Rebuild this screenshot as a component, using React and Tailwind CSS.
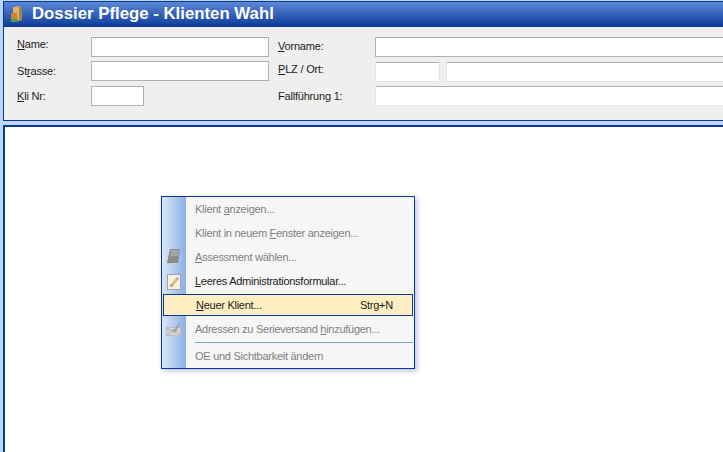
import React from 'react';

const FolderIcon = () => (
    <svg width="13" height="18" viewBox="0 0 13 18" className="shrink-0">
        <path d="M3 1 L11 0 L12 14 L3 16 Z" fill="#d9b36a" />
        <path d="M9 1 L11 0 L12 14 L9 15 Z" fill="#a9823f" />
        <rect x="1" y="7" width="6" height="8" fill="#b9893f" />
        <circle cx="4" cy="9" r="2" fill="#e8792b" />
        <rect x="1" y="13" width="7" height="3" fill="#4fa03a" />
    </svg>
);

const BookIcon = () => (
    <svg width="14" height="16" viewBox="0 0 14 16">
        <path d="M3 0 H13 L11 14 H0 Z" fill="#8b8b8b" />
        <path d="M4 1 H12 L11 7 H3 Z" fill="#a4a4a4" />
        <path d="M0 14 H11 L10.5 15.5 H1 Z" fill="#c8c8c8" />
    </svg>
);

const FormIcon = () => (
    <svg width="14" height="16" viewBox="0 0 14 16">
        <rect x="0.5" y="0.5" width="13" height="15" fill="#f4f0e2" stroke="#a4a4a4" />
        <path d="M3 13 L4 10 L9 4 L11 6 L6 12 Z" fill="#d8bc84" />
        <path d="M3 13 L4 10 L6 12 Z" fill="#b07a70" />
        <path d="M9 4 L10 3 L12 5 L11 6 Z" fill="#c08a8a" />
    </svg>
);

const MailIcon = () => (
    <svg width="16" height="15" viewBox="0 0 16 15">
        <rect x="0.5" y="5.5" width="14" height="8" fill="#d6d6d6" stroke="#bcbcbc" />
        <path d="M1 6 L7 10 L10 8 M1 13 L6 9 M14 13 L9 9" fill="none" stroke="#b0b0b0" />
        <path d="M6 9 L9 11 L15 1 L13 1 L9 7 L7 7 Z" fill="#a2a2a2" />
    </svg>
);

const fieldLeft = 'h-5 bg-white border border-[#b0b0b0]';
const fieldSoft = 'h-5 bg-white border border-[#e4e4e8] border-t-[#b0b0b4] rounded-[2px]';

const MenuItem = ({ children, icon, hotkey, active, disabled, className = 'h-[24px]' }) => {
    let rowCls = 'flex items-center';
    if (active) {
        rowCls += ' h-[22px] mb-[1px] ml-[1px] mr-[1px] bg-[#ffeec2] border border-[#0a3a94] text-[#1c1c1c]';
    } else {
        rowCls += ' ' + className;
    }
    if (disabled) rowCls += ' text-[#808080]';
    if (!disabled && !active) rowCls += ' text-[#1c1c1c]';

    return (
        <div className={rowCls}>
            <div className={active ? 'w-[32px] shrink-0' : 'w-[33px] shrink-0 flex'}>
                <span className="flex w-[24px] justify-center">{icon}</span>
            </div>
            <span className="flex-1 whitespace-nowrap">{children}</span>
            {hotkey && <span className="w-[52px] whitespace-nowrap">{hotkey}</span>}
        </div>
    );
};

const App = () => {
    return (
        <div
            className="relative w-[723px] h-[452px] overflow-hidden bg-[#bcd6f8] text-[11px] tracking-[-0.2px] text-[#1c1c1c]"
            style={{ fontFamily: '"Liberation Sans", Arial, sans-serif' }}
        >
            <div className="flex flex-col w-[780px] h-[500px] pt-[1px] pl-[3px]">
                {/* Kopfbereich */}
                <div className="border border-[#0a3a94] bg-[#efefef] h-[120px] shrink-0">
                    <div className="flex items-center gap-[9px] h-[25px] pl-[6px] bg-gradient-to-b from-[#5c88d8] to-[#0a3a98]">
                        <FolderIcon />
                        <span className="text-white font-bold text-[16.8px] tracking-normal leading-none whitespace-nowrap">
                            Dossier Pflege - Klienten Wahl
                        </span>
                    </div>
                    <div className="flex pt-[10px] pl-[13px]">
                        <div className="flex flex-col w-[261px] shrink-0">
                            <div className="flex h-5 mb-[4px]">
                                <span className="w-[74px] -mt-[1px]"><u>N</u>ame:</span>
                                <div className={`${fieldLeft} w-[178px]`} />
                            </div>
                            <div className="flex h-5 mb-[5px]">
                                <span className="w-[74px] mt-[2px]">St<u>r</u>asse:</span>
                                <div className={`${fieldLeft} w-[178px]`} />
                            </div>
                            <div className="flex h-5">
                                <span className="w-[74px] mt-[2px]"><u>K</u>li Nr:</span>
                                <div className={`${fieldLeft} w-[53px]`} />
                            </div>
                        </div>
                        <div className="flex flex-col flex-1">
                            <div className="flex h-5 mb-[5px]">
                                <span className="w-[97px] mt-[1px] shrink-0"><u>V</u>orname:</span>
                                <div className={`${fieldLeft} flex-1`} />
                            </div>
                            <div className="flex h-5 mb-[4px]">
                                <span className="w-[97px] -mt-[1px] shrink-0"><u>P</u>LZ / Ort:</span>
                                <div className={`${fieldSoft} w-[65px] mr-[6px] shrink-0`} />
                                <div className={`${fieldSoft} flex-1`} />
                            </div>
                            <div className="flex h-5">
                                <span className="w-[97px] mt-[2px] shrink-0">Fallführung 1:</span>
                                <div className={`${fieldSoft} flex-1`} />
                            </div>
                        </div>
                    </div>
                </div>

                {/* Arbeitsbereich */}
                <div className="mt-[4px] flex-1 bg-white border-2 border-[#0a3a94]" />
            </div>

            {/* Kontextmenü */}
            <div className="absolute left-[161px] top-[196px] w-[254px] h-[173px] border border-[#0a3a94] bg-[#f6f6f6] tracking-[-0.27px] shadow-[2px_2px_5px_rgba(90,120,170,0.45)]">
                <div className="absolute inset-y-0 left-0 w-[24px] bg-gradient-to-r from-[#dbe7fa] to-[#8cb0e4]" />
                <div className="relative flex flex-col pt-[1px]">
                    <MenuItem disabled className="h-[23px]">Klient <u>a</u>nzeigen...</MenuItem>
                    <MenuItem disabled>Klient in neuem <u>F</u>enster anzeigen...</MenuItem>
                    <MenuItem disabled icon={<BookIcon />}><u>A</u>ssessment wählen...</MenuItem>
                    <MenuItem icon={<FormIcon />} className="h-[25px]"><u>L</u>eeres Administrationsformular...</MenuItem>
                    <MenuItem active hotkey="Strg+N"><u>N</u>euer Klient...</MenuItem>
                    <MenuItem disabled icon={<MailIcon />}>Adressen zu Serieversand <u>h</u>inzufügen...</MenuItem>
                    <div className="h-[1px] mt-[1px] ml-[33px] mr-[1px] bg-[#7f9fd0]" />
                    <MenuItem disabled className="h-[26px]">OE und Sichtbarkeit ändern</MenuItem>
                </div>
            </div>
        </div>
    );
};

export default App;
